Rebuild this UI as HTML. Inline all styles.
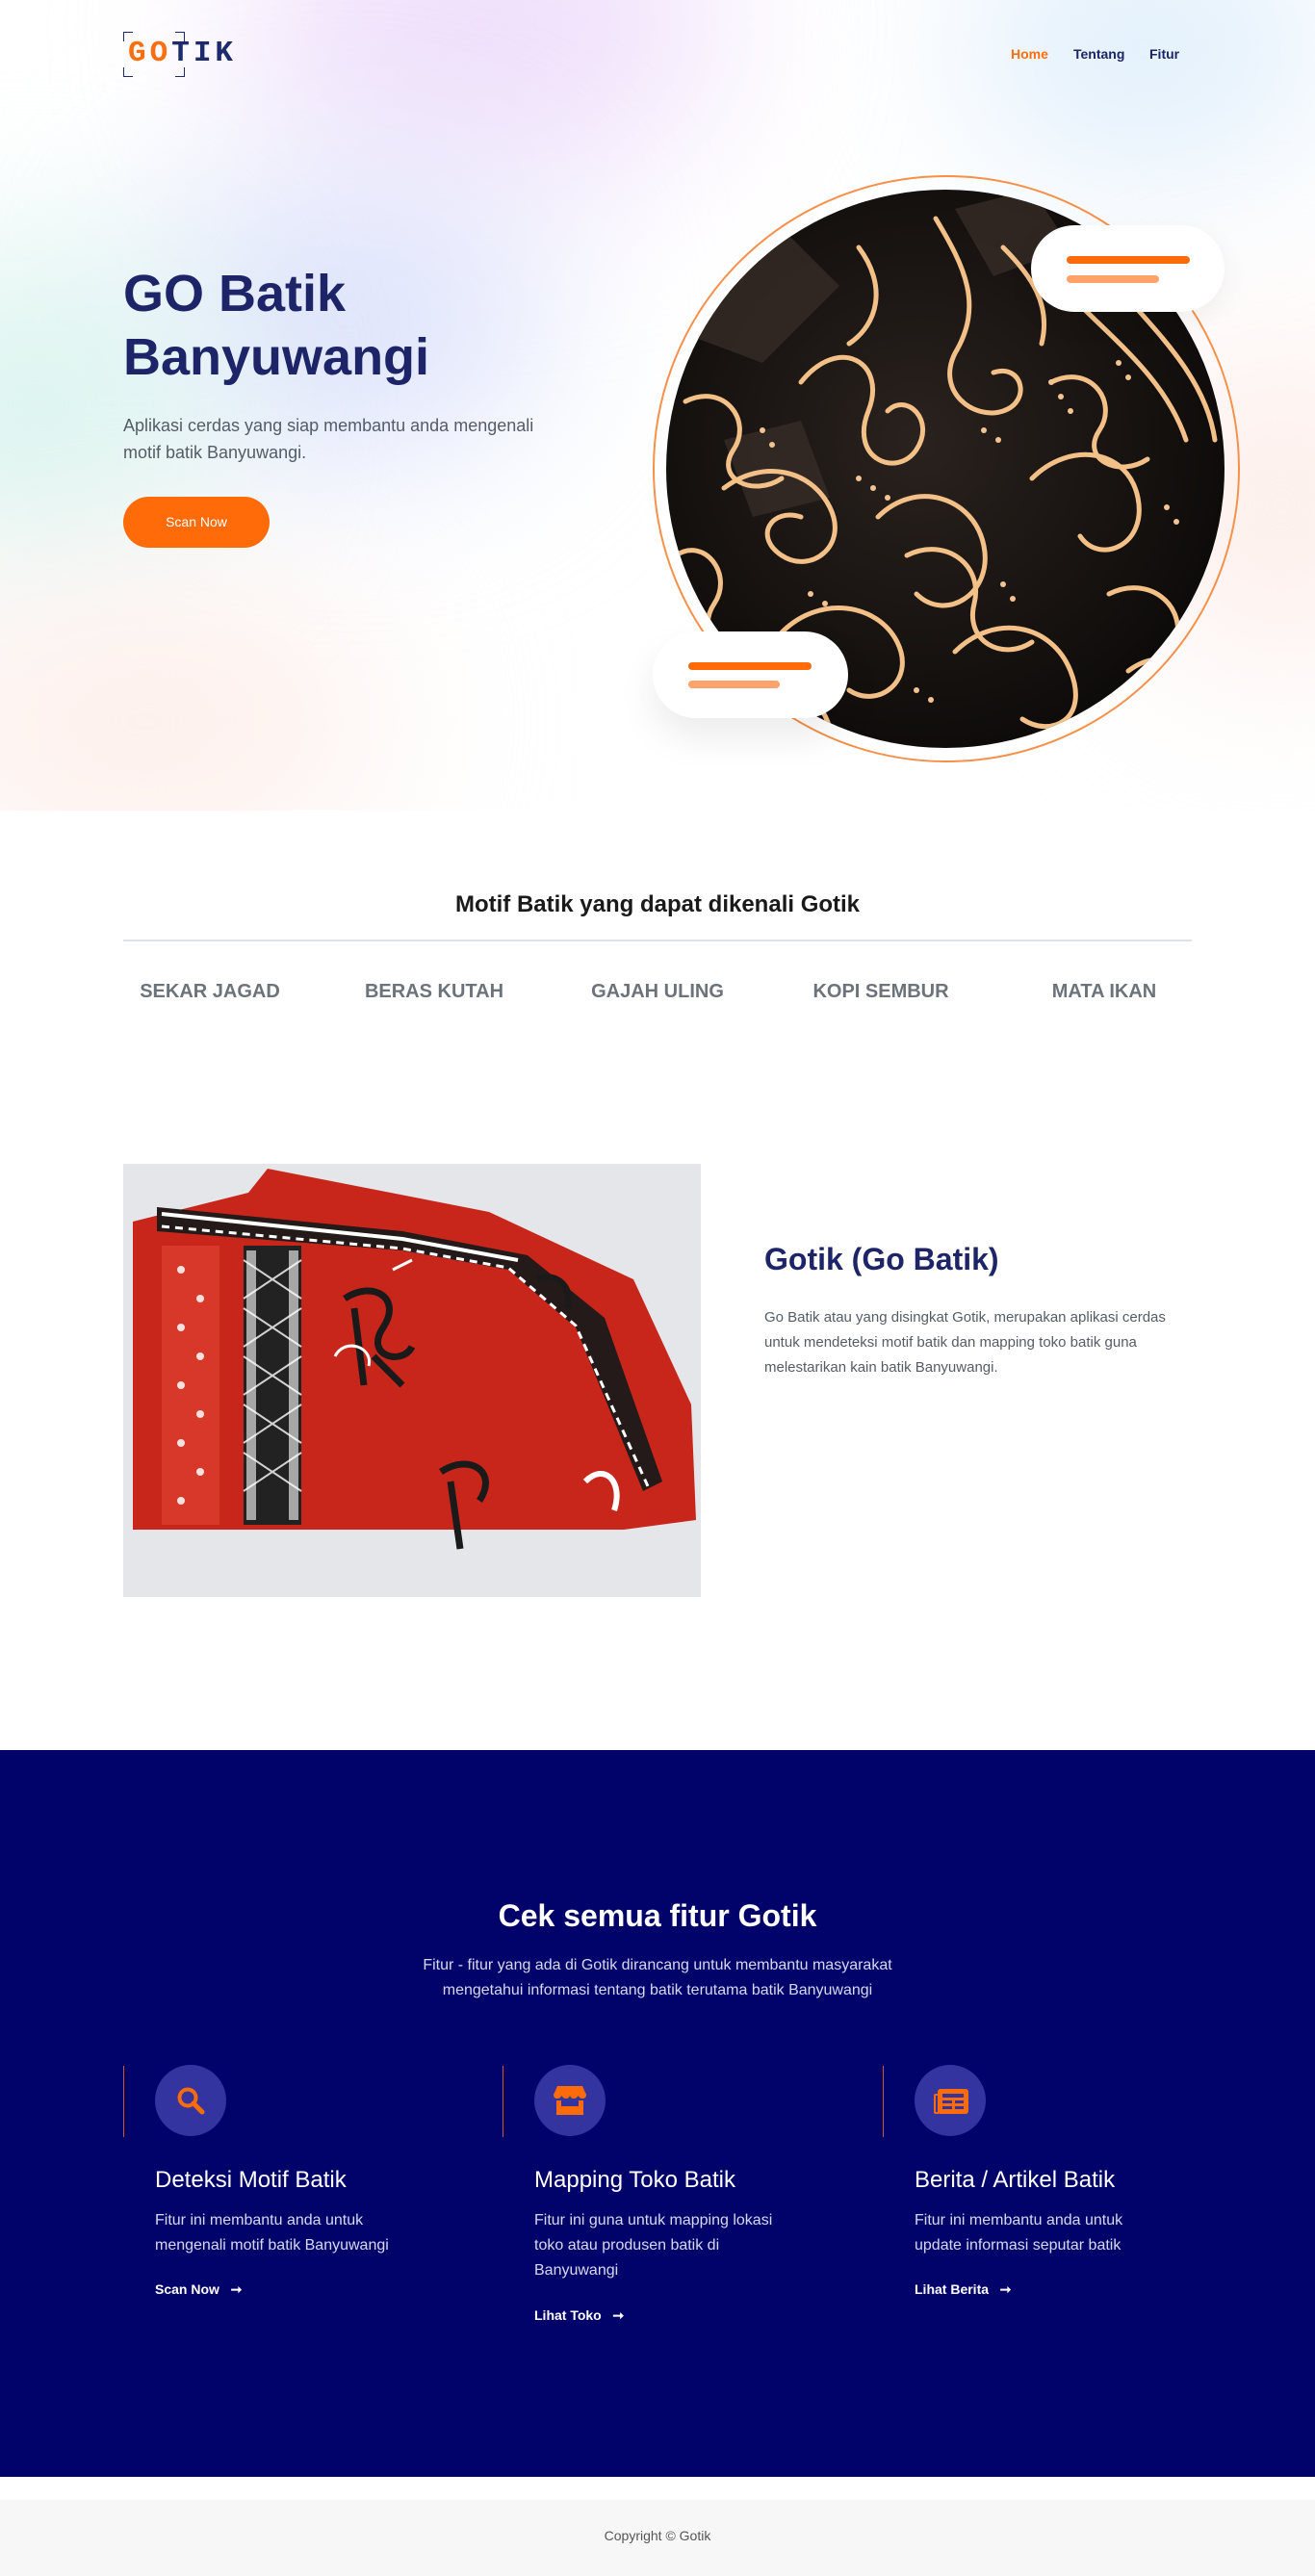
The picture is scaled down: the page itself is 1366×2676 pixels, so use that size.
<!DOCTYPE html>
<html><head><meta charset="utf-8"><style>
*{margin:0;padding:0;box-sizing:border-box}
body{width:1366px;height:2676px;font-family:"Liberation Sans",sans-serif;background:#fff;position:relative;overflow:hidden}
.abs{position:absolute}
.hero{position:absolute;left:0;top:0;width:1366px;height:842px;overflow:hidden;background:#fff}
.blob{position:absolute;border-radius:50%;filter:blur(90px)}
</style></head><body>
<div class="hero">
 <div class="blob" style="left:250px;top:-150px;width:500px;height:350px;background:#f0e0fb"></div>
 <div class="blob" style="left:150px;top:180px;width:420px;height:300px;background:#dde3fb"></div>
 <div class="blob" style="left:-150px;top:250px;width:380px;height:340px;background:#dcf4f0"></div>
 <div class="blob" style="left:1000px;top:-80px;width:380px;height:260px;background:#dfeefb"></div>
 <div class="blob" style="left:1180px;top:350px;width:300px;height:350px;background:#fdeeea"></div>
 <div class="blob" style="left:-100px;top:600px;width:500px;height:300px;background:#fdf0ec"></div>
</div>
<!-- logo -->
<div class="abs" style="left:128px;top:33px;width:10px;height:10px;border-left:1.5px solid #1e2a6e;border-top:1.5px solid #1e2a6e"></div>
<div class="abs" style="left:128px;top:70px;width:10px;height:10px;border-left:1.5px solid #1e2a6e;border-bottom:1.5px solid #1e2a6e"></div>
<div class="abs" style="left:182px;top:33px;width:10px;height:10px;border-right:1.5px solid #1e2a6e;border-top:1.5px solid #1e2a6e"></div>
<div class="abs" style="left:182px;top:70px;width:10px;height:10px;border-right:1.5px solid #1e2a6e;border-bottom:1.5px solid #1e2a6e"></div>
<div class="abs" style="left:133px;top:38px;font-family:'Liberation Mono',monospace;font-weight:bold;font-size:31px;letter-spacing:4px;color:#1e2a6e"><span style="color:#ff6f0f">GO</span>TIK</div>
<div class="abs" style="left:1050px;top:48px;font-size:14px;font-weight:bold;color:#ff6f0f">Home</div>
<div class="abs" style="left:1115px;top:48px;font-size:14px;font-weight:bold;color:#1b2466">Tentang</div>
<div class="abs" style="left:1194px;top:48px;font-size:14px;font-weight:bold;color:#1b2466">Fitur</div>
<div class="abs" style="left:128px;top:272px;font-size:54px;line-height:66px;font-weight:bold;color:#1d2468">GO Batik<br>Banyuwangi</div>
<div class="abs" style="left:128px;top:428px;font-size:18px;line-height:28px;color:#555c66">Aplikasi cerdas yang siap membantu anda mengenali<br>motif batik Banyuwangi.</div>
<div class="abs" style="left:128px;top:516px;width:152px;height:53px;border-radius:27px;background:#ff6b08;color:#fff;font-size:14px;text-align:center;line-height:53px">Scan Now</div>
<!-- circle -->
<div class="abs" style="left:678px;top:182px;width:610px;height:610px;border-radius:50%;border:2px solid #f7904a"></div>
<svg class="abs" style="left:692px;top:197px" width="580" height="580" viewBox="0 0 580 580">
<defs><clipPath id="c"><circle cx="290" cy="290" r="290"/></clipPath>
<radialGradient id="g" cx="45%" cy="45%" r="60%"><stop offset="0" stop-color="#2a221e"/><stop offset="1" stop-color="#0c0a09"/></radialGradient></defs>
<g clip-path="url(#c)">
<rect width="580" height="580" fill="url(#g)"/>
<path d="M0 60 L120 40 L180 100 L100 180 L20 150Z M300 20 L380 0 L420 60 L340 90Z M60 260 L140 240 L170 320 L90 340Z" fill="#3a2f2a" opacity=".7"/>
<g fill="none" stroke="#f3c088" stroke-width="5" stroke-linecap="round">
<path d="M280 30 C310 80 330 120 300 170 C280 210 320 240 350 230 C380 220 370 180 340 190"/>
<path d="M140 200 C180 150 230 180 210 230 C190 280 240 300 260 270 C280 240 250 210 230 230"/>
<path d="M60 310 C100 280 150 290 170 330 C190 370 150 400 120 380 C90 360 110 330 140 340"/>
<path d="M220 340 C260 300 320 320 330 370 C340 420 290 450 260 420"/>
<path d="M380 300 C420 260 480 270 490 320 C500 370 450 390 430 360"/>
<path d="M430 120 C470 160 520 200 540 260"/>
<path d="M460 90 C500 140 560 190 570 260"/>
<path d="M120 460 C160 420 220 430 240 470 C260 510 220 540 190 520"/>
<path d="M300 480 C340 440 400 450 420 500 C440 550 400 570 370 550"/>
<path d="M10 380 C40 360 70 400 50 430 C30 460 60 490 90 470"/>
<path d="M460 420 C500 400 540 430 530 470"/>
<path d="M350 60 C380 90 400 120 390 160"/>
<path d="M20 220 C60 200 90 240 70 270 C50 300 90 320 120 300"/>
<path d="M200 60 C230 100 220 140 190 160"/>
<path d="M400 200 C440 180 470 220 450 250 C430 280 470 300 500 280"/>
<path d="M250 380 C290 360 330 390 320 430 C310 470 350 490 380 470"/>
<path d="M480 500 C520 470 560 500 550 540"/>
<path d="M90 540 C120 510 160 520 170 560"/>
</g>
<g fill="#f3c493">
<circle cx="200" cy="300" r="3"/><circle cx="215" cy="310" r="3"/><circle cx="230" cy="320" r="3"/><circle cx="400" cy="200" r="3"/><circle cx="410" cy="215" r="3"/><circle cx="420" cy="230" r="3"/><circle cx="470" cy="180" r="3"/><circle cx="480" cy="195" r="3"/><circle cx="150" cy="420" r="3"/><circle cx="165" cy="430" r="3"/><circle cx="330" cy="250" r="3"/><circle cx="345" cy="260" r="3"/><circle cx="260" cy="520" r="3"/><circle cx="275" cy="530" r="3"/><circle cx="100" cy="250" r="3"/><circle cx="110" cy="265" r="3"/><circle cx="520" cy="330" r="3"/><circle cx="530" cy="345" r="3"/><circle cx="350" cy="410" r="3"/><circle cx="360" cy="425" r="3"/>
</g></g></svg>
<div class="abs" style="left:1071px;top:234px;width:201px;height:90px;border-radius:45px;background:#fff;box-shadow:0 10px 30px rgba(0,0,0,.06)"></div>
<div class="abs" style="left:1108px;top:266px;width:128px;height:8px;border-radius:4px;background:#ff6b08"></div>
<div class="abs" style="left:1108px;top:286px;width:96px;height:8px;border-radius:4px;background:#ffa36a"></div>
<div class="abs" style="left:678px;top:656px;width:203px;height:90px;border-radius:45px;background:#fff;box-shadow:0 20px 40px rgba(0,0,0,.08)"></div>
<div class="abs" style="left:715px;top:688px;width:128px;height:8px;border-radius:4px;background:#ff6b08"></div>
<div class="abs" style="left:715px;top:707px;width:95px;height:8px;border-radius:4px;background:#ffa36a"></div>
<!-- motif -->
<div class="abs" style="left:0;top:926px;width:1366px;text-align:center;font-size:24px;font-weight:bold;color:#1a1a1a">Motif Batik yang dapat dikenali Gotik</div>
<div class="abs" style="left:128px;top:976px;width:1110px;height:2px;background:#dde3e8"></div>
<div class="abs" style="left:118px;top:1019px;width:200px;text-align:center;font-size:20px;font-weight:bold;color:#6c737b">SEKAR JAGAD</div>
<div class="abs" style="left:351px;top:1019px;width:200px;text-align:center;font-size:20px;font-weight:bold;color:#6c737b">BERAS KUTAH</div>
<div class="abs" style="left:583px;top:1019px;width:200px;text-align:center;font-size:20px;font-weight:bold;color:#6c737b">GAJAH ULING</div>
<div class="abs" style="left:815px;top:1019px;width:200px;text-align:center;font-size:20px;font-weight:bold;color:#6c737b">KOPI SEMBUR</div>
<div class="abs" style="left:1047px;top:1019px;width:200px;text-align:center;font-size:20px;font-weight:bold;color:#6c737b">MATA IKAN</div>
<!-- about image -->
<svg class="abs" style="left:128px;top:1209px" width="600" height="450" viewBox="0 0 600 450">
<rect width="600" height="450" fill="#e4e6e9"/>
<path d="M10 60 L130 30 L150 5 L380 50 L530 120 L590 250 L595 370 L520 380 L10 380 Z" fill="#c8261b"/>
<path d="M35 45 L290 70 L420 95 L500 160 L560 330 L540 340 L470 170 L400 110 L290 90 L35 70Z" fill="#241a1a"/>
<path d="M40 52 L290 78 L410 100" stroke="#fff" stroke-width="4" fill="none"/>
<path d="M40 65 L290 88 L400 108 L470 168 L545 335" stroke="#fff" stroke-width="3" stroke-dasharray="8 6" fill="none"/>
<rect x="40" y="85" width="60" height="290" fill="#d8382a"/>
<rect x="125" y="85" width="60" height="290" fill="#222"/>
<g fill="#fff"><rect x="128" y="90" width="10" height="280" opacity=".6"/><rect x="172" y="90" width="10" height="280" opacity=".6"/></g>
<g stroke="#fff" stroke-width="2" opacity=".8"><path d="M125 100 L185 140 M185 100 L125 140 M125 150 L185 190 M185 150 L125 190 M125 200 L185 240 M185 200 L125 240 M125 250 L185 290 M185 250 L125 290 M125 300 L185 340 M185 300 L125 340"/></g>
<g fill="#fff" opacity=".85"><circle cx="60" cy="110" r="4"/><circle cx="80" cy="140" r="4"/><circle cx="60" cy="170" r="4"/><circle cx="80" cy="200" r="4"/><circle cx="60" cy="230" r="4"/><circle cx="80" cy="260" r="4"/><circle cx="60" cy="290" r="4"/><circle cx="80" cy="320" r="4"/><circle cx="60" cy="350" r="4"/></g>
<path d="M230 140 C260 120 290 140 270 170 C250 200 290 210 300 190 M240 150 L250 230 M260 200 L290 230" stroke="#1a1a1a" stroke-width="7" fill="none"/>
<path d="M220 200 C230 180 260 190 255 210 M280 110 L300 100" stroke="#fff" stroke-width="3" fill="none"/>
<path d="M330 320 C360 300 390 320 370 350 M340 330 L350 400" stroke="#1a1a1a" stroke-width="7" fill="none"/>
<path d="M480 330 C500 310 520 330 510 360" stroke="#fff" stroke-width="6" fill="none"/>
<path d="M430 120 C450 110 470 130 460 150" stroke="#1a1a1a" stroke-width="6" fill="none"/>
</svg>
<div class="abs" style="left:794px;top:1290px;font-size:32px;font-weight:bold;color:#1d2468">Gotik (Go Batik)</div>
<div class="abs" style="left:794px;top:1356px;width:440px;font-size:15px;line-height:26px;color:#555c66">Go Batik atau yang disingkat Gotik, merupakan aplikasi cerdas untuk mendeteksi motif batik dan mapping toko batik guna melestarikan kain batik Banyuwangi.</div>
<!-- features -->
<div class="abs" style="left:0;top:1818px;width:1366px;height:755px;background:#02036a"></div>
<div class="abs" style="left:0;top:1972px;width:1366px;text-align:center;font-size:32px;font-weight:bold;color:#fff">Cek semua fitur Gotik</div>
<div class="abs" style="left:0;top:2029px;width:1366px;text-align:center;font-size:16px;line-height:26px;color:#d6d8ef">Fitur - fitur yang ada di Gotik dirancang untuk membantu masyarakat<br>mengetahui informasi tentang batik terutama batik Banyuwangi</div>

<div class="abs" style="left:128px;top:2146px;width:1px;height:74px;background:#c75a2a"></div>
<div class="abs" style="left:522px;top:2146px;width:1px;height:74px;background:#c75a2a"></div>
<div class="abs" style="left:917px;top:2146px;width:1px;height:74px;background:#c75a2a"></div>
<div class="abs" style="left:161px;top:2145px;width:74px;height:74px;border-radius:50%;background:#3434a0"></div>
<div class="abs" style="left:555px;top:2145px;width:74px;height:74px;border-radius:50%;background:#3434a0"></div>
<div class="abs" style="left:950px;top:2145px;width:74px;height:74px;border-radius:50%;background:#3434a0"></div>
<svg class="abs" style="left:183px;top:2167px" width="30" height="30" viewBox="0 0 30 30"><circle cx="12" cy="12" r="8.5" stroke="#ff6b08" stroke-width="4" fill="none"/><path d="M18 18 L27 27" stroke="#ff6b08" stroke-width="5" stroke-linecap="round"/></svg>
<svg class="abs" style="left:575px;top:2167px" width="34" height="30" viewBox="0 0 34 30"><path d="M4 0 H30 L34 9 Q34 13 30 13 Q27 13 25.5 10 Q24 13 21 13 Q18 13 17 10 Q16 13 13 13 Q10 13 8.5 10 Q7 13 4 13 Q0 13 0 9Z" fill="#ff6b08"/><path d="M3 15 H8 V21 H26 V15 H31 V30 H3Z" fill="#ff6b08"/></svg>
<svg class="abs" style="left:970px;top:2170px" width="36" height="26" viewBox="0 0 36 26"><rect x="4" y="0" width="32" height="26" rx="3" fill="#ff6b08"/><rect x="0" y="5" width="6" height="21" rx="2" fill="#ff6b08"/><rect x="2" y="7" width="2" height="17" fill="#3434a0"/><g fill="#3434a0"><rect x="9" y="5" width="22" height="4"/><rect x="9" y="12" width="10" height="3"/><rect x="22" y="12" width="9" height="3"/><rect x="9" y="18" width="10" height="3"/><rect x="22" y="18" width="9" height="3"/></g></svg>

<div class="abs" style="left:161px;top:2251px;font-size:24px;color:#fff">Deteksi Motif Batik</div>
<div class="abs" style="left:555px;top:2251px;font-size:24px;color:#fff">Mapping Toko Batik</div>
<div class="abs" style="left:950px;top:2251px;font-size:24px;color:#fff">Berita / Artikel Batik</div>
<div class="abs" style="left:161px;top:2294px;width:290px;font-size:16px;line-height:26px;color:#d6d8ef">Fitur ini membantu anda untuk<br>mengenali motif batik Banyuwangi</div>
<div class="abs" style="left:555px;top:2294px;width:290px;font-size:16px;line-height:26px;color:#d6d8ef">Fitur ini guna untuk mapping lokasi<br>toko atau produsen batik di<br>Banyuwangi</div>
<div class="abs" style="left:950px;top:2294px;width:290px;font-size:16px;line-height:26px;color:#d6d8ef">Fitur ini membantu anda untuk<br>update informasi seputar batik</div>
<div class="abs" style="left:161px;top:2370px;font-size:14px;font-weight:bold;color:#fff">Scan Now &nbsp;&nbsp;➞</div>
<div class="abs" style="left:555px;top:2397px;font-size:14px;font-weight:bold;color:#fff">Lihat Toko &nbsp;&nbsp;➞</div>
<div class="abs" style="left:950px;top:2370px;font-size:14px;font-weight:bold;color:#fff">Lihat Berita &nbsp;&nbsp;➞</div>
<!-- footer -->
<div class="abs" style="left:0;top:2597px;width:1366px;height:79px;background:#f7f7f7"></div>
<div class="abs" style="left:0;top:2626px;width:1366px;text-align:center;font-size:14px;color:#555">Copyright © Gotik</div>
</body></html>
